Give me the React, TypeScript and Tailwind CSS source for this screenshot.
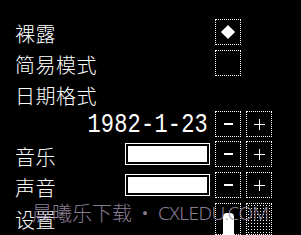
import React from 'react';

const cjk = { fontFamily: '"Noto Sans CJK SC", "Noto Sans", sans-serif' };

function Box({ children, className = '' }: { children?: React.ReactNode; className?: string }) {
  return (
    <div
      className={`w-[26px] h-[26px] border border-dotted border-white flex items-center justify-center text-white ${className}`}
    >
      {children}
    </div>
  );
}

function StepButtons() {
  return (
    <div className="flex gap-[5px]">
      <Box>
        <div className="w-[9px] h-[1.5px] bg-white" />
      </Box>
      <Box>
        <div className="relative w-[11px] h-[11px]">
          <div className="absolute left-0 top-[5px] w-[11px] h-[1.5px] bg-white" />
          <div className="absolute left-[5px] top-0 w-[1.5px] h-[11px] bg-white" />
        </div>
      </Box>
    </div>
  );
}

function Bar() {
  return (
    <div className="w-[85px] h-[22px] border border-white p-[2px] bg-black">
      <div className="w-full h-full bg-white" />
    </div>
  );
}

function Label({ text }: { text: string }) {
  return (
    <span className="text-white text-[20px] font-light leading-none tracking-[0.5px]" style={cjk}>
      {text}
    </span>
  );
}

export default function App() {
  return (
    <div className="relative w-[301px] h-[235px] bg-black overflow-hidden">
      <div className="pt-[19px] pl-[15px] pr-[29px] flex flex-col">
        <div className="h-[31px] flex justify-between items-start">
          <div className="pt-[5px]"><Label text="裸露" /></div>
          <div className="w-[57px]">
            <Box>
              <div className="w-[10px] h-[10px] bg-white rotate-45" />
            </Box>
          </div>
        </div>

        <div className="h-[31px] flex justify-between items-start">
          <div className="pt-[5px]"><Label text="简易模式" /></div>
          <div className="w-[57px]">
            <Box />
          </div>
        </div>

        <div className="h-[30px] flex items-start">
          <div className="pt-[5px]"><Label text="日期格式" /></div>
        </div>

        <div className="h-[30px] flex justify-end items-start gap-[7px]">
          <span
            className="inline-block mt-[2px] text-white text-[22px] leading-[26px] tracking-[0.2px] scale-y-125 origin-center"
            style={{ fontFamily: '"Liberation Mono", monospace' }}
          >
            1982-1-23
          </span>
          <StepButtons />
        </div>

        <div className="h-[31px] flex justify-between items-start">
          <div className="pt-[6px]"><Label text="音乐" /></div>
          <div className="flex items-start gap-[5px]">
            <div className="pt-[2px]"><Bar /></div>
            <StepButtons />
          </div>
        </div>

        <div className="h-[31px] flex justify-between items-start">
          <div className="pt-[6px]"><Label text="声音" /></div>
          <div className="flex items-start gap-[5px]">
            <div className="pt-[2px]"><Bar /></div>
            <StepButtons />
          </div>
        </div>

        <div className="h-[31px] flex justify-between items-start">
          <div className="pt-[7px]"><Label text="设置" /></div>
          <div className="flex gap-[5px]">
            <div className="w-[26px] h-[32px] border border-dotted border-white flex justify-center pt-[9px]">
              <div className="w-[11px] h-[30px] bg-white rounded-t-[4px]" />
            </div>
            <div className="w-[26px] h-[32px] border border-dotted border-white bg-[radial-gradient(circle,#ffffff_0.8px,transparent_0.9px)] bg-[length:3px_3px]" />
          </div>
        </div>
      </div>

      <div
        className="absolute left-[32px] top-[201px] flex items-center text-[20px] leading-[24px] font-light text-[#a093ad] opacity-85 whitespace-nowrap"
        style={cjk}
      >
        <span>晨曦乐下载</span>
        <span className="mx-[3px]">•</span>
        <span style={{ fontFamily: '"Noto Sans", sans-serif' }} className="text-[19px] font-light tracking-[-0.5px]">
          CXLEDU.COM
        </span>
      </div>
    </div>
  );
}
